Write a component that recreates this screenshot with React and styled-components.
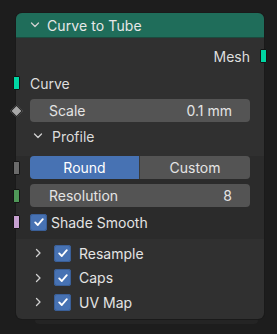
import React from 'react';
import styled, { createGlobalStyle } from 'styled-components';

const GlobalStyle = createGlobalStyle`
  html, body {
    margin: 0;
    padding: 0;
    background: #1d1d1d;
  }
  body {
    font-family: Inter, "Noto Sans", "DejaVu Sans", sans-serif;
    -webkit-font-smoothing: antialiased;
  }
`;

const Chevron = ({ open }) => (
  <svg width="10" height="10" viewBox="0 0 10 10" fill="none">
    {open ? (
      <polyline points="1.5,3 5,6.5 8.5,3" stroke="#d0d0d0" strokeWidth="1.3" strokeLinecap="round" strokeLinejoin="round" />
    ) : (
      <polyline points="3.5,1.5 7,5 3.5,8.5" stroke="#d0d0d0" strokeWidth="1.3" strokeLinecap="round" strokeLinejoin="round" />
    )}
  </svg>
);

const Check = () => (
  <svg width="12" height="12" viewBox="0 0 12 12" fill="none">
    <polyline points="2.2,6.4 4.8,9 9.8,3.2" stroke="#ffffff" strokeWidth="1.9" strokeLinecap="round" strokeLinejoin="round" />
  </svg>
);

const App = () => (
  <>
    <GlobalStyle />
    <Canvas>
      <Node>
        <Header>
          <Chevron open />
          <HeaderTitle>Curve to Tube</HeaderTitle>
        </Header>

        <Body>
          <SocketRow $align="right" $h={24} $top={6}>
            <RowLabel>Mesh</RowLabel>
            <Socket $side="right" $color="#00d6a3" />
          </SocketRow>

          <SocketRow $h={24} $top={3}>
            <RowLabel>Curve</RowLabel>
            <Socket $side="left" $color="#00d6a3" />
          </SocketRow>

          <FieldRow $top={4}>
            <Diamond />
            <Field>
              <span>Scale</span>
              <span>0.1 mm</span>
            </Field>
          </FieldRow>

          <PanelHeader $h={20} $top={4}>
            <Chevron open />
            <PanelTitle>Profile</PanelTitle>
          </PanelHeader>
        </Body>

        <PanelContent>
          <FieldRow $top={6}>
            <Socket $side="left" $color="#6a6a6a" $inset />
            <Segmented>
              <Segment $active>Round</Segment>
              <Segment>Custom</Segment>
            </Segmented>
          </FieldRow>

          <FieldRow $top={5}>
            <Socket $side="left" $color="#4f9858" $inset />
            <Field>
              <span>Resolution</span>
              <span>8</span>
            </Field>
          </FieldRow>

          <CheckRow $top={6}>
            <Socket $side="left" $color="#c6a0d0" $inset />
            <CheckBox><Check /></CheckBox>
            <CheckLabel>Shade Smooth</CheckLabel>
          </CheckRow>
        </PanelContent>

        <SubPanels>
          {['Resample', 'Caps', 'UV Map'].map((name) => (
            <SubPanelRow key={name}>
              <Chevron />
              <CheckBox><Check /></CheckBox>
              <CheckLabel>{name}</CheckLabel>
            </SubPanelRow>
          ))}
        </SubPanels>
      </Node>
      <NodeShadow />
    </Canvas>
  </>
);

const Canvas = styled.div`
  padding: 13px 0 0 16px;
  width: 248px;
`;

const Node = styled.div`
  position: relative;
  width: 248px;
  background: #303030;
  border-radius: 6px;
  box-shadow: 0 0 0 1px #1a1a1a;
`;

const NodeShadow = styled.div`
  height: 5px;
  margin: 0 6px 0 19px;
  background: #242424;
  border-radius: 0 0 4px 4px;
`;

const Header = styled.div`
  height: 24px;
  display: flex;
  align-items: center;
  gap: 7px;
  padding-left: 14px;
  background: #1f6d5a;
  border-radius: 6px 6px 0 0;
  border-bottom: 1px solid #1c4a3e;
`;

const HeaderTitle = styled.span`
  color: #e8e8e8;
  font-size: 14px;
  letter-spacing: 0.1px;
`;

const Body = styled.div`
  padding-bottom: 4px;
`;

const SocketRow = styled.div`
  position: relative;
  height: ${(p) => p.$h}px;
  margin-top: ${(p) => p.$top}px;
  display: flex;
  align-items: center;
  justify-content: ${(p) => (p.$align === 'right' ? 'flex-end' : 'flex-start')};
  padding: 0 14px;
`;

const RowLabel = styled.span`
  color: #dedede;
  font-size: 14px;
`;

const Socket = styled.div`
  position: absolute;
  top: 50%;
  ${(p) => (p.$side === 'right' ? 'right: -3px;' : 'left: -3px;')}
  width: 5px;
  height: 12px;
  transform: translateY(-50%);
  background: ${(p) => p.$color};
  border: 1px solid #141414;
  border-radius: 1px;
`;

const Diamond = styled.div`
  position: absolute;
  left: -4px;
  top: 50%;
  width: 7px;
  height: 7px;
  transform: translateY(-50%) rotate(45deg);
  background: #a8a8a8;
  border: 1px solid #1e1e1e;
`;

const FieldRow = styled.div`
  position: relative;
  margin-top: ${(p) => p.$top}px;
  padding: 0 14px;
`;

const Field = styled.div`
  height: 23px;
  display: flex;
  align-items: center;
  justify-content: space-between;
  padding: 0 18px 0 19px;
  background: #545454;
  border-radius: 4px;
  color: #e4e4e4;
  font-size: 14px;
`;

const PanelHeader = styled.div`
  height: ${(p) => p.$h}px;
  margin-top: ${(p) => p.$top}px;
  display: flex;
  align-items: center;
  gap: 9px;
  padding-left: 17px;
`;

const PanelTitle = styled.span`
  color: #dcdcdc;
  font-size: 14px;
`;

const PanelContent = styled.div`
  background: #2b2b2b;
  padding-bottom: 8px;
`;

const Segmented = styled.div`
  height: 23px;
  display: grid;
  grid-template-columns: 109px 1fr;
  gap: 1px;
  background: #3a3a3a;
  border-radius: 4px;
  overflow: hidden;
`;

const Segment = styled.div`
  display: flex;
  align-items: center;
  justify-content: center;
  background: ${(p) => (p.$active ? '#4772b3' : '#545454')};
  color: ${(p) => (p.$active ? '#ffffff' : '#e4e4e4')};
  font-size: 14px;
`;

const CheckRow = styled.div`
  position: relative;
  height: 18px;
  margin-top: ${(p) => p.$top}px;
  display: flex;
  align-items: center;
  gap: 4px;
  padding-left: 14px;
`;

const CheckBox = styled.div`
  width: 17px;
  height: 17px;
  display: flex;
  align-items: center;
  justify-content: center;
  background: #4772b3;
  border-radius: 3px;
  box-shadow: inset 0 0 0 1px #3a5f98;
`;

const CheckLabel = styled.span`
  color: #e4e4e4;
  font-size: 14px;
`;

const SubPanels = styled.div`
  padding: 2px 0 4px;
  border-radius: 0 0 6px 6px;
`;

const SubPanelRow = styled.div`
  height: 24.5px;
  display: flex;
  align-items: center;
  padding-left: 17px;

  & > svg {
    margin-right: 11px;
  }
  & > span {
    margin-left: 8px;
  }
`;

export default App;
